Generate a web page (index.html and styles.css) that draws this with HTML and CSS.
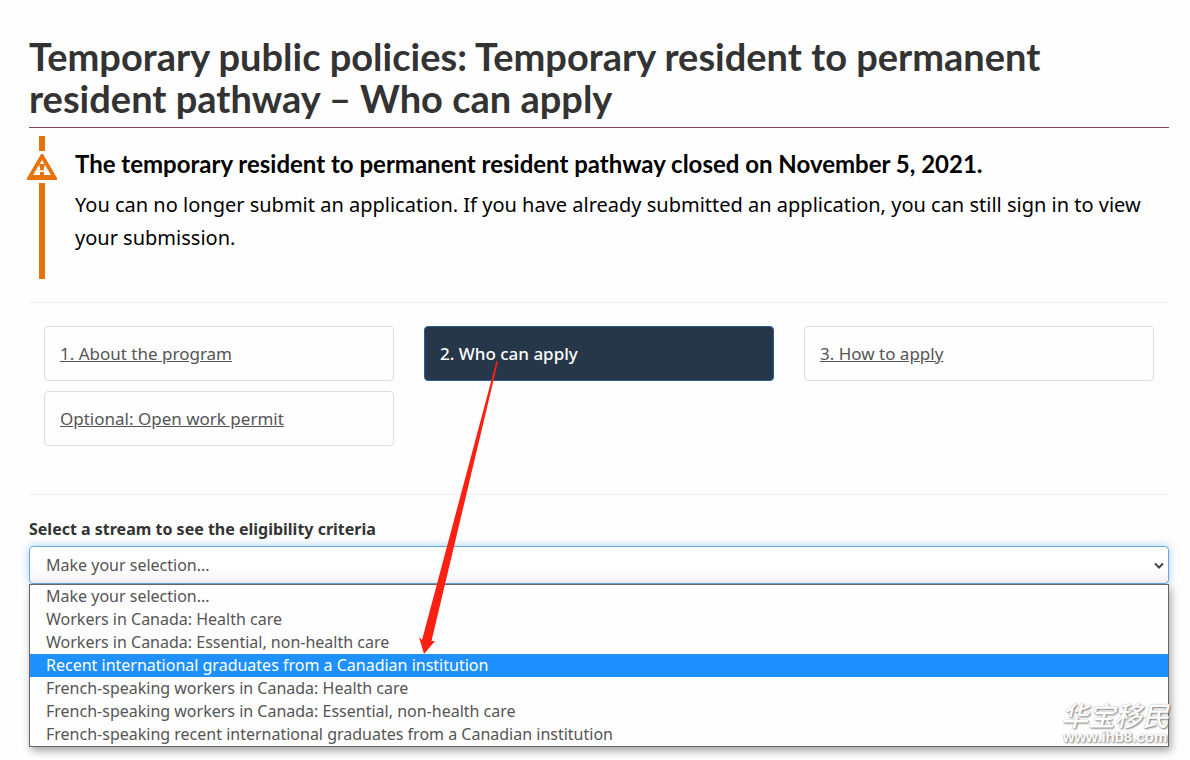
FILE: index.html
```html
<!DOCTYPE html>
<html lang="en">
<head>
  <meta charset="UTF-8" />
  <meta name="viewport" content="width=device-width, initial-scale=1.0" />
  <title>Temporary resident to permanent resident pathway – Who can apply</title>
  <link rel="stylesheet" href="styles.css">
</head>
<body>
  <main class="container">
    <h1>Temporary public policies: Temporary resident to permanent resident pathway – Who can apply</h1>

    <section class="alert">
      <div class="alert-marker">
        <span class="bar bar-top"></span>
        <svg class="alert-icon" viewBox="0 0 30 26" aria-hidden="true">
          <path fill="#e8730c" fill-rule="evenodd" d="M14 0 H16 L30 24 V26 H0 V24 Z M15 6 L6 21 H24 Z" />
          <path fill="#e8730c" d="M12 10 H18 L16.500 16.500 H13.500 Z M13 18 H17 V22 H13 Z" />
        </svg>
        <span class="bar bar-bottom"></span>
      </div>
      <div class="alert-text">
        <h2>The temporary resident to permanent resident pathway closed on November 5, 2021.</h2>
        <p>You can no longer submit an application. If you have already submitted an application, you can still sign in to view your submission.</p>
      </div>
    </section>

    <nav class="steps">
      <a href="#about">1. About the program</a>
      <a href="#who" class="active" aria-current="page">2. Who can apply</a>
      <a href="#how">3. How to apply</a>
      <a href="#permit">Optional: Open work permit</a>
    </nav>

    <form class="stream">
      <label for="stream">Select a stream to see the eligibility criteria</label>
      <div class="select-wrap">
        <select id="stream">
          <option>Make your selection...</option>
        </select>
        <svg class="chevron" viewBox="0 0 10 8" aria-hidden="true">
          <path d="M1 1.500 L5 5.500 L9 1.500" fill="none" stroke="#444" stroke-width="2" />
        </svg>
        <ul class="options" role="listbox" aria-label="Streams">
          <li role="option">Make your selection...</li>
          <li role="option">Workers in Canada: Health care</li>
          <li role="option">Workers in Canada: Essential, non-health care</li>
          <li role="option" class="selected" aria-selected="true">Recent international graduates from a Canadian institution</li>
          <li role="option">French-speaking workers in Canada: Health care</li>
          <li role="option">French-speaking workers in Canada: Essential, non-health care</li>
          <li role="option">French-speaking recent international graduates from a Canadian institution</li>
        </ul>
        <div class="watermark">
          <span class="watermark-name">华宝移民</span>
          <span class="watermark-url">www.ihb8.com</span>
        </div>
      </div>
    </form>

    <svg class="arrow" viewBox="0 0 84 296" aria-hidden="true">
      <path fill="#fb2012" d="M78.500 1 L80 1.500 L13.500 281 L17 281 L6 294 L1 277 L4 280 Z" />
    </svg>
  </main>
</body>
</html>
```
FILE: styles.css
```css
* {
  box-sizing: border-box;
}

body {
  margin: 0;
  background: #fefefe;
  color: #333;
  font-family: "Noto Sans", sans-serif;
  font-size: 16px;
}

.container {
  position: relative;
  padding: 35px 21px 12px 29px;
}

h1 {
  margin: 0;
  padding-bottom: 8px;
  border-bottom: 1px solid #894458;
  font-family: Lato, sans-serif;
  font-size: 38px;
  font-weight: 700;
  line-height: 42px;
}

.alert {
  display: flex;
  margin-top: 8px;
  padding-bottom: 23px;
  border-bottom: 1px solid #eee;
  color: #000;
}

.alert-marker {
  display: flex;
  flex-direction: column;
  align-items: center;
  width: 30px;
  margin-left: -2px;
}

.bar {
  width: 6px;
  background: #e8730c;
}

.bar-top {
  height: 15px;
}

.bar-bottom {
  flex: 1;
}

.alert-icon {
  width: 30px;
  height: 26px;
  margin: 3px 0;
}

.alert-text {
  flex: 1;
  padding: 15px 0 25px 18px;
}

.alert h2 {
  margin: 0 0 11px;
  font-family: Lato, sans-serif;
  font-size: 24px;
  font-weight: 700;
  line-height: 26px;
}

.alert p {
  margin: 0;
  font-size: 20px;
  line-height: 33px;
}

.steps {
  display: grid;
  grid-template-columns: repeat(3, 1fr);
  gap: 10px 30px;
  padding: 23px 15px 48px;
  border-bottom: 1px solid #eee;
}

.steps a {
  padding: 15px;
  border: 1px solid #ddd;
  border-radius: 4px;
  color: #555;
  font-size: 17px;
  line-height: 23px;
}

.steps .active {
  background: #26374a;
  border-color: #2a5f94;
  color: #fff;
  font-weight: 500;
  text-decoration: none;
}

.stream label {
  display: block;
  margin: 22px 0 5px;
  font-weight: 700;
  line-height: 24px;
}

.select-wrap {
  position: relative;
}

.select-wrap select {
  display: block;
  appearance: none;
  width: 100%;
  height: 38px;
  padding: 0 16px;
  border: 1px solid #66a9e0;
  border-radius: 4px;
  outline: none;
  background: linear-gradient(#fff 60%, #f2f2f5);
  box-shadow: 0 0 8px rgba(102, 175, 233, 0.6);
  color: #555;
  font-family: inherit;
  font-size: 16px;
}

.chevron {
  position: absolute;
  top: 16px;
  right: 5px;
  width: 10px;
  height: 8px;
}

.options {
  position: relative;
  margin: 0;
  padding: 0;
  border: 1px solid #666;
  background: #fefefe;
  box-shadow: 2px 4px 8px rgba(0, 0, 0, 0.35);
  color: #555;
  list-style: none;
}

.options li {
  padding: 0 16px;
  line-height: 23px;
}

.options .selected {
  background: #1e90ff;
  color: #fff;
}

.watermark {
  position: absolute;
  right: 0;
  bottom: 3px;
  display: flex;
  flex-direction: column;
  align-items: center;
  color: #fff;
  text-shadow: 1px 1px 2px #777, 0 0 1px #aaa;
}

.watermark-name {
  font-family: "Noto Sans CJK SC", sans-serif;
  font-size: 27px;
  font-style: italic;
  font-weight: 500;
  line-height: 30px;
}

.watermark-url {
  font-family: "Liberation Sans", sans-serif;
  font-size: 15px;
  font-weight: 700;
  line-height: 14px;
}

/* hand-drawn pointer from the active step to the highlighted stream */
.arrow {
  position: absolute;
  top: 360px;
  left: 418px;
  width: 84px;
  height: 296px;
  pointer-events: none;
}
```
